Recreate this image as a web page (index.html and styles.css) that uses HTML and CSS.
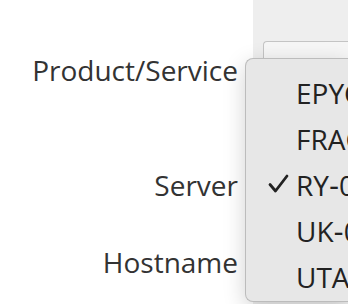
FILE: index.html
```html
<!DOCTYPE html>
<html lang="en">
<head>
  <meta charset="UTF-8" />
  <title>Server Settings</title>
  <link rel="stylesheet" href="styles.css">
</head>
<body>
  <div class="form">
    <div class="labels">
      <div class="label product">Product/Service</div>
      <div class="label server">Server</div>
      <div class="label host">Hostname</div>
    </div>
    <div class="panel">
      <div class="field"></div>
    </div>
  </div>

  <ul class="menu">
    <li>EPYC-01</li>
    <li>FRAC-01</li>
    <li class="selected">
      <svg class="check" width="22" height="20" viewBox="0 0 22 20">
        <path d="M2 10.5 L7.5 17 L19 2" fill="none" stroke="#222" stroke-width="2.8" stroke-linecap="round" stroke-linejoin="round"/>
      </svg>
      RY&#8209;01
    </li>
    <li>UK&#8209;01</li>
    <li>UTA-01</li>
  </ul>
</body>
</html>
```

FILE: styles.css
```css
body {
  margin: 0;
  background: #fff;
  font-family: "Open Sans", "DejaVu Sans", sans-serif;
  overflow: hidden;
}
.form {
  display: flex;
  height: 304px;
}
.labels {
  width: 238px;
  padding-right: 15px;
  padding-top: 47px;
  text-align: right;
  color: #333;
  font-size: 28px;
  line-height: 46px;
}
.label.product {
  margin-bottom: 69px;
}
.label.server {
  margin-bottom: 31px;
}
.panel {
  flex: 1;
  background: #eeeeee;
  padding: 41px 0 0 10px;
}
.field {
  height: 40px;
  background: #f6f6f6;
  border: 1px solid #c4c4c4;
  border-right: none;
  border-radius: 4px 0 0 4px;
}
.menu {
  position: absolute;
  left: 245px;
  top: 58px;
  width: 103px;
  height: 244px;
  margin: 0;
  padding: 11px 0 0 50px;
  list-style: none;
  background: #e7e7e7;
  border: 1px solid #bcbcbc;
  border-right: none;
  border-radius: 8px 0 0 8px;
  box-shadow: 0 6px 22px rgba(0, 0, 0, 0.18);
  font-size: 28px;
  line-height: 46px;
  color: #222;
  white-space: nowrap;
  overflow: hidden;
  box-sizing: border-box;
}
.menu li {
  position: relative;
}
.check {
  position: absolute;
  left: -28px;
  top: 12px;
}
```
